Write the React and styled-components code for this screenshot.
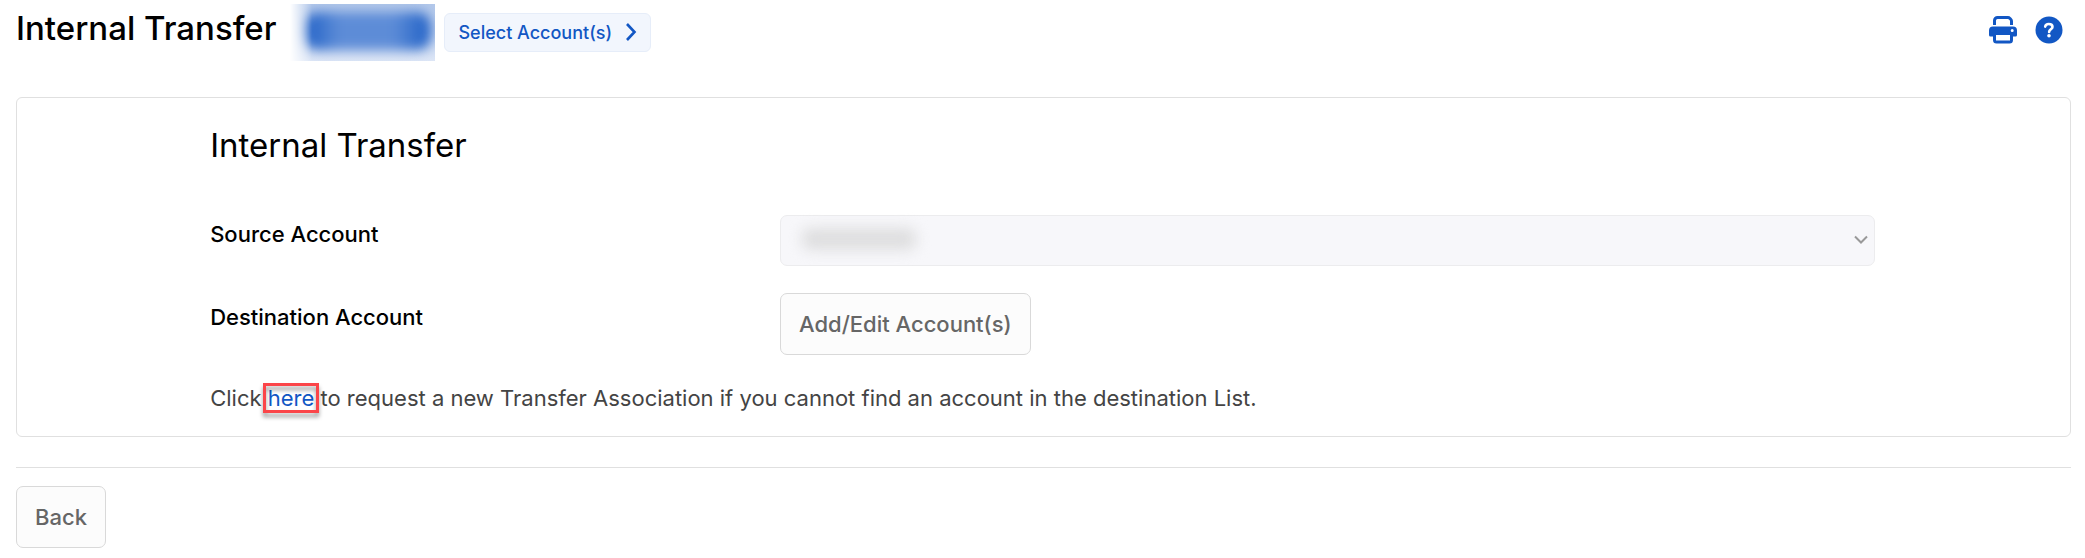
import React from "react";
import styled, { createGlobalStyle } from "styled-components";

const GlobalStyle = createGlobalStyle`
  *, *::before, *::after { box-sizing: border-box; }
  body {
    margin: 0;
    background: #fff;
    color: #000;
    font-family: Inter, "Liberation Sans", sans-serif;
    font-size: 22px;
    line-height: 32px;
  }
`;

const Page = styled.div`
  padding: 4px 14px 10px 16px;
`;

const Header = styled.header`
  display: flex;
  align-items: center;
  min-height: 57px;
  margin-bottom: 36px;
`;

const PageTitle = styled.h1`
  margin: 0;
  padding-bottom: 9px;
  font-size: 33px;
  line-height: 40px;
  font-weight: 500;
`;

const AccountMask = styled.div`
  width: 145px;
  height: 57px;
  margin: 0 9px 0 14px;
  padding: 8px 4px 11px 14px;
  overflow: hidden;
  background: linear-gradient(#b3c8ea, #c3d3ee 50%, #dde6f6);
  mask-image: linear-gradient(90deg, transparent, #000 22px);
`;

const AccountBadge = styled.div`
  height: 100%;
  border-radius: 14px;
  background: linear-gradient(90deg, #1f60c6, #5d8cd7 28%, #5d8cd7 70%, #1f60c6);
  filter: blur(6px);
`;

const SelectAccounts = styled.button`
  display: flex;
  align-items: center;
  gap: 13px;
  height: 39px;
  padding: 0 13px;
  border: 1px solid #e6edf9;
  border-radius: 6px;
  background: #f2f6fd;
  color: #1257c4;
  font: 500 18px/24px Inter, sans-serif;
`;

const Tools = styled.div`
  display: flex;
  gap: 18px;
  margin-left: auto;
  padding: 0 8px 5px 0;
`;

const ToolButton = styled.button`
  display: flex;
  padding: 0;
  border: 0;
  background: none;
  color: #1257c4;
`;

const Card = styled.section`
  padding: 27px 9.5% 22px 9.4%;
  border: 1px solid #e0e0e0;
  border-radius: 6px;
`;

const CardTitle = styled.h2`
  margin: 0 0 50px;
  font-size: 33px;
  line-height: 40px;
  font-weight: 400;
`;

const FieldRow = styled.div`
  display: grid;
  grid-template-columns: 570fr 1095fr;
  align-items: start;
  margin-bottom: 27px;
`;

const FieldLabel = styled.label`
  padding-top: ${(p) => (p.$forButton ? 8 : 3)}px;
  font-weight: 500;
`;

const SelectWrap = styled.div`
  position: relative;
  display: flex;
`;

const Select = styled.select`
  appearance: none;
  width: 100%;
  height: 51px;
  padding: 0 40px 0 20px;
  border: 1px solid #ececee;
  border-radius: 7px;
  background: #f7f7fa;
  opacity: 1;
`;

const SelectMask = styled.div`
  position: absolute;
  top: 13px;
  left: 22px;
  width: 114px;
  height: 22px;
  border-radius: 8px;
  background: #dededf;
  filter: blur(7px);
`;

const SelectArrow = styled.svg`
  position: absolute;
  top: 20px;
  right: 7px;
`;

const Button = styled.button`
  justify-self: start;
  height: 62px;
  padding: 0 18px;
  border: 1px solid #d9d9d9;
  border-radius: 7px;
  background: #fcfcfc;
  color: #666;
  font: 500 22px/32px Inter, sans-serif;
`;

const Note = styled.p`
  margin: 0;
  color: #444;
`;

const HereLink = styled.a`
  position: relative;
  color: #1257c4;
  text-decoration: none;

  &::after {
    content: "";
    position: absolute;
    inset: -2px -5px;
    border: 3px solid #fb4549;
    filter: drop-shadow(0 4px 2px rgba(0, 0, 0, 0.4));
  }
`;

const Footer = styled.footer`
  margin-top: 30px;
  padding-top: 18px;
  border-top: 1px solid #e0e0e0;
`;

const PrintIcon = () => (
  <svg width="28" height="28" viewBox="0 0 28 28" aria-hidden="true">
    <path d="M5.500 9V4.500a3 3 0 0 1 3-3h10.500q1 0 2 1l.5.500q1 1 1 2V9" fill="none" stroke="currentColor" strokeWidth="3" />
    <path
      fillRule="evenodd"
      fill="currentColor"
      d="M4 10.500h20a4 4 0 0 1 4 4V19a1.500 1.500 0 0 1-1.500 1.500H24V24a3.500 3.500 0 0 1-3.500 3.500h-13A3.500 3.500 0 0 1 4 24v-3.500H1.500A1.500 1.500 0 0 1 0 19v-4.500a4 4 0 0 1 4-4zM7 19v5.500h14V19zM23.200 13a1.500 1.500 0 1 0 0 3 1.500 1.500 0 0 0 0-3z"
    />
  </svg>
);

const HelpIcon = () => (
  <svg width="28" height="28" viewBox="0 0 28 28" aria-hidden="true">
    <circle cx="14" cy="14" r="13.500" fill="currentColor" />
    <path
      d="M10.200 10.600c.3-1.700 1.600-2.600 3.500-2.600 2.200 0 3.800 1.100 3.800 2.900 0 2.300-3.400 2.500-3.400 5.100"
      fill="none"
      stroke="#fff"
      strokeWidth="2.600"
      strokeLinecap="round"
    />
    <circle cx="14" cy="19.800" r="1.800" fill="#fff" />
  </svg>
);

const ChevronRight = () => (
  <svg width="12" height="20" viewBox="0 0 12 20" aria-hidden="true">
    <path d="M2 1l7.500 8L2 17" fill="none" stroke="currentColor" strokeWidth="2.600" />
  </svg>
);

export default function App() {
  return (
    <Page>
      <GlobalStyle />
      <Header>
        <PageTitle>Internal Transfer</PageTitle>
        <AccountMask>
          <AccountBadge />
        </AccountMask>
        <SelectAccounts type="button">
          Select Account(s)
          <ChevronRight />
        </SelectAccounts>
        <Tools>
          <ToolButton type="button" aria-label="Print">
            <PrintIcon />
          </ToolButton>
          <ToolButton type="button" aria-label="Help">
            <HelpIcon />
          </ToolButton>
        </Tools>
      </Header>

      <main>
        <Card>
          <CardTitle>Internal Transfer</CardTitle>
          <FieldRow>
            <FieldLabel htmlFor="source">Source Account</FieldLabel>
            <SelectWrap>
              <Select id="source" disabled>
                <option value="" />
              </Select>
              <SelectMask />
              <SelectArrow width="14" height="10" viewBox="0 0 14 10" aria-hidden="true">
                <path d="M1 1.500l6 6 6-6" fill="none" stroke="#999" strokeWidth="2" />
              </SelectArrow>
            </SelectWrap>
          </FieldRow>
          <FieldRow>
            <FieldLabel htmlFor="destination" $forButton>
              Destination Account
            </FieldLabel>
            <Button id="destination" type="button">
              Add/Edit Account(s)
            </Button>
          </FieldRow>
          <Note>
            Click <HereLink href="#request">here</HereLink> to request a new Transfer Association if you cannot find an
            account in the destination List.
          </Note>
        </Card>
      </main>

      <Footer>
        <Button type="button">Back</Button>
      </Footer>
    </Page>
  );
}
